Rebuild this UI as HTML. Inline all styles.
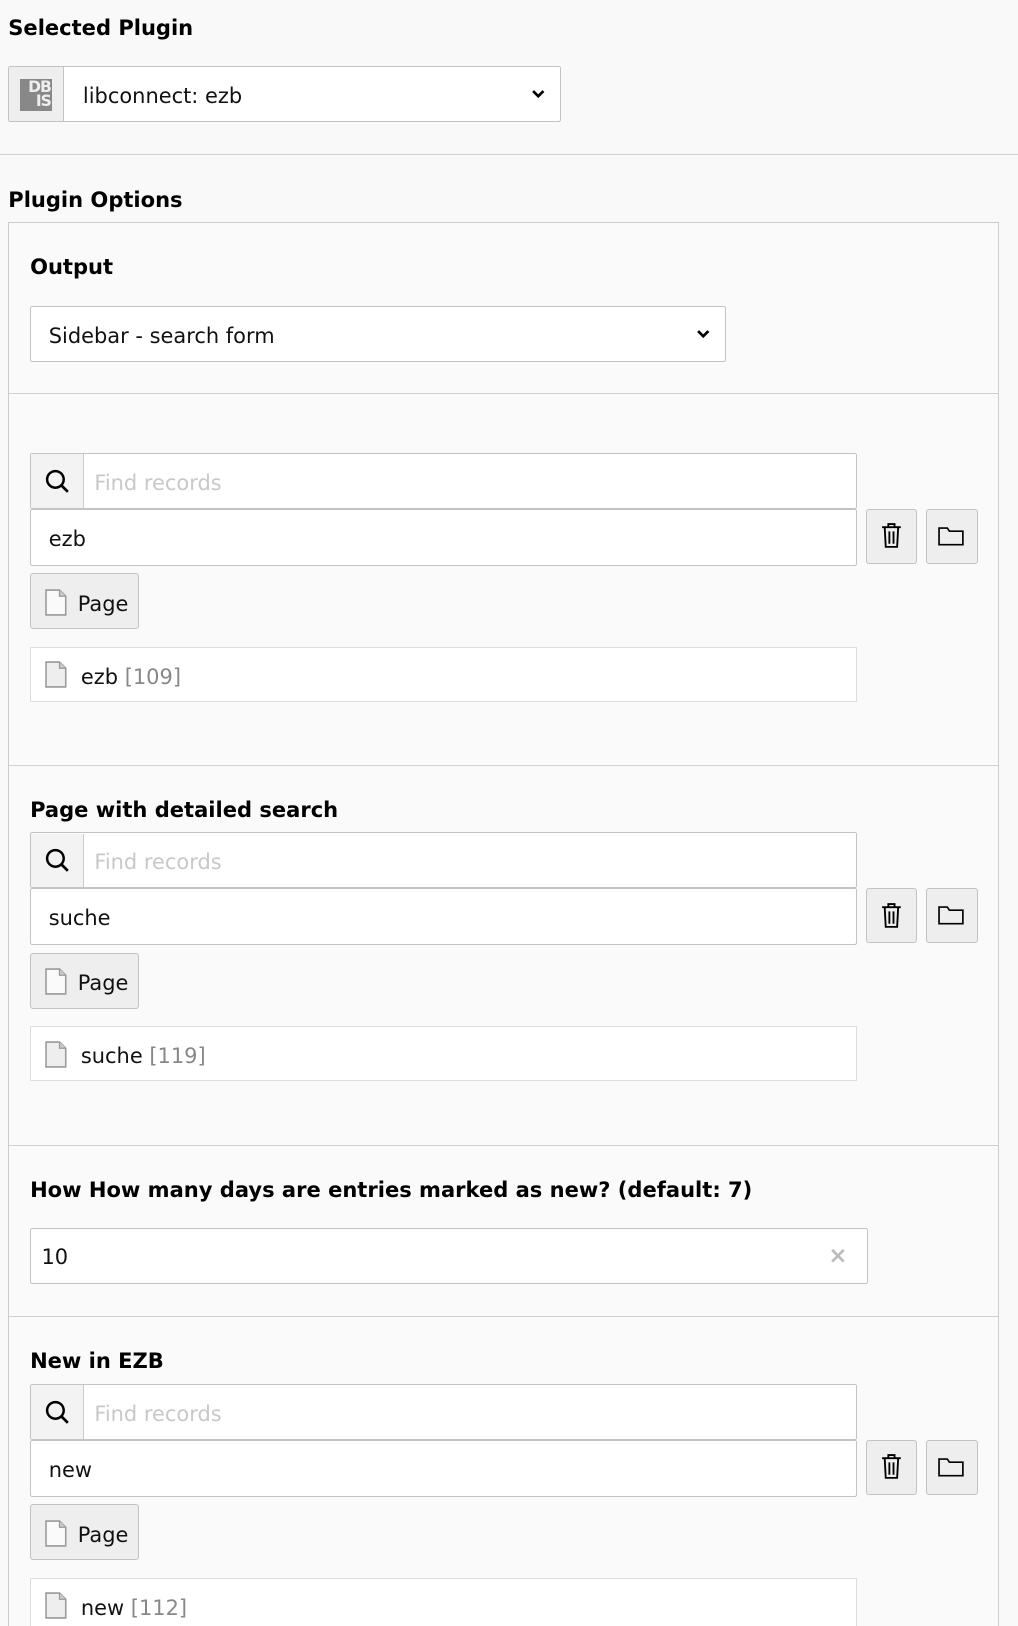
<!DOCTYPE html>
<html><head><meta charset="utf-8"><style>
html,body{margin:0;padding:0;background:#f9f9f9;width:1018px;height:1626px;overflow:hidden}
#w{zoom:1.0367;position:relative;width:982px;height:1568px;font-family:"DejaVu Sans","Liberation Sans",sans-serif;color:#111}
.a{position:absolute;box-sizing:border-box}
.h{font-weight:bold;font-size:20.3px;color:#000;line-height:1}
.box{background:#fff;border:1px solid #c3c3c3;border-radius:2px}
.t{font-size:20.2px;line-height:1}
.btn{background:#eee;border:1px solid #c3c3c3;border-radius:3px}
.hr{height:1px;background:#d0d0d0}
.ph{color:#c8c8c8}
.gr{color:#888}
</style></head><body><div id="w">
<div class="a h" style="left:8px;top:16px">Selected Plugin</div>
<div class="a box" style="left:8px;top:64px;width:533px;height:54px"></div>
<div class="a" style="left:9px;top:65px;width:53px;height:52px;background:#eee;border-right:1px solid #c3c3c3"></div>
<div class="a" style="left:19px;top:76px;width:31px;height:31px;background:#888;color:#eee;font:bold 15px/14px 'DejaVu Sans',sans-serif;text-align:right;padding:1px 1px 0 0;letter-spacing:-1px">DB<br>IS</div>
<div class="a t" style="left:80px;top:83px">libconnect: ezb</div>
<svg class="a" style="left:512px;top:86px" width="14" height="10" viewBox="0 0 14 10"><path d="M2 2l5 5 5-5" stroke="#000" stroke-width="2.6" fill="none"/></svg>
<div class="a hr" style="left:0;top:149px;width:982px"></div>
<div class="a h" style="left:8px;top:182px">Plugin Options</div>
<div class="a" style="left:8px;top:214px;width:956px;height:1400px;border:1px solid #ccc;background:#fafafa"></div>

<div class="a h" style="left:29px;top:247px">Output</div>
<div class="a box" style="left:29px;top:295px;width:671px;height:54px"></div>
<div class="a t" style="left:47px;top:314px">Sidebar - search form</div>
<svg class="a" style="left:671px;top:317px" width="14" height="10" viewBox="0 0 14 10"><path d="M2 2l5 5 5-5" stroke="#000" stroke-width="2.6" fill="none"/></svg>
<div class="a hr" style="left:9px;top:379px;width:954px"></div>

<div class="a hr" style="left:9px;top:738px;width:954px"></div>
<div class="a h" style="left:29px;top:771px">Page with detailed search</div>
<div class="a hr" style="left:9px;top:1104px;width:954px"></div>
<div class="a h" style="left:29px;top:1137px">How How many days are entries marked as new? (default: 7)</div>
<div class="a box" style="left:29px;top:1185px;width:808px;height:54px"></div>
<div class="a t" style="left:40px;top:1203px">10</div>
<div class="a" style="left:799px;top:1199px;font-size:22px;color:#bbb;font-weight:bold">×</div>
<div class="a hr" style="left:9px;top:1269px;width:954px"></div>
<div class="a h" style="left:29px;top:1302px">New in EZB</div>

<div id="g"></div>
<script>
var tops=[437,803,1335],vals=["ezb","suche","new"],ids=["109","119","112"],h="";
for(var i=0;i<3;i++){var y=tops[i];
h+='<div class="a box" style="left:29px;top:'+y+'px;width:798px;height:54px"></div>';
h+='<div class="a" style="left:30px;top:'+(y+1)+'px;width:51px;height:52px;background:#f3f3f3;border-right:1px solid #ccc"></div>';
h+='<svg class="a" style="left:42px;top:'+(y+14)+'px" width="26" height="26" viewBox="0 0 26 26"><circle cx="11" cy="11" r="8" stroke="#000" stroke-width="2.4" fill="none"/><path d="M17 17l6 6" stroke="#000" stroke-width="2.6"/></svg>';
h+='<div class="a t ph" style="left:91px;top:'+(y+19)+'px">Find records</div>';
h+='<div class="a box" style="left:29px;top:'+(y+54)+'px;width:798px;height:55px"></div>';
h+='<div class="a t" style="left:47px;top:'+(y+73)+'px">'+vals[i]+'</div>';
h+='<div class="a btn" style="left:835px;top:'+(y+54)+'px;width:50px;height:53px"></div>';
h+='<svg class="a" style="left:848px;top:'+(y+67)+'px" width="24" height="26" viewBox="0 0 24 26"><path d="M3 5h18M9 5V2h6v3M5.5 5l1 19h11l1-19M10 9v12M14 9v12" stroke="#000" stroke-width="1.8" fill="none"/></svg>';
h+='<div class="a btn" style="left:893px;top:'+(y+54)+'px;width:50px;height:53px"></div>';
h+='<svg class="a" style="left:905px;top:'+(y+70)+'px" width="26" height="20" viewBox="0 0 26 20"><path d="M1 2h8l2 3h13v13H1z" stroke="#000" stroke-width="1.6" fill="none"/></svg>';
h+='<div class="a btn" style="left:29px;top:'+(y+116)+'px;width:105px;height:54px"></div>';
h+='<svg class="a" style="left:43px;top:'+(y+131)+'px" width="22" height="26" viewBox="0 0 22 26"><path d="M1 1h13l6 6v18H1z" fill="#fafafa" stroke="#999" stroke-width="1.5"/><path d="M14 1v6h6" fill="#ccc" stroke="#999" stroke-width="1.2"/></svg>';
h+='<div class="a t" style="left:75px;top:'+(y+136)+'px">Page</div>';
h+='<div class="a" style="left:29px;top:'+(y+187)+'px;width:798px;height:53px;background:#fff;border:1px solid #ddd"></div>';
h+='<svg class="a" style="left:43px;top:'+(y+201)+'px" width="22" height="26" viewBox="0 0 22 26"><path d="M1 1h13l6 6v18H1z" fill="#eee" stroke="#999" stroke-width="1.5"/><path d="M14 1v6h6" fill="#ccc" stroke="#999" stroke-width="1.2"/></svg>';
h+='<div class="a t" style="left:78px;top:'+(y+206)+'px">'+vals[i]+' <span class="gr">['+ids[i]+']</span></div>';
}
document.getElementById("g").outerHTML=h;
</script>
</div></body></html>
